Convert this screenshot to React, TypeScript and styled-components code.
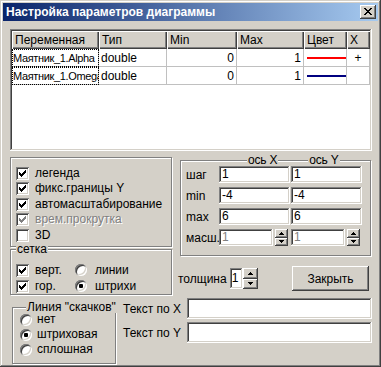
import React from 'react';
import styled, { createGlobalStyle, css } from 'styled-components';

const Global = createGlobalStyle`
  html, body { margin: 0; padding: 0; background: #d4d0c8; }
  body { font-family: "Liberation Sans", Arial, sans-serif; font-size: 11px; color: #000; }
  * { box-sizing: border-box; }
`;

const raised = css`
  box-shadow: inset -1px -1px #404040, inset 1px 1px #ffffff, inset -2px -2px #808080, inset 2px 2px #d4d0c8;
`;
const sunken = css`
  box-shadow: inset -1px -1px #ffffff, inset 1px 1px #808080, inset -2px -2px #d4d0c8, inset 2px 2px #404040;
`;

const Window = styled.div`
  width: 381px;
  height: 367px;
  background: #d4d0c8;
  box-shadow: inset -1px -1px #404040, inset 1px 1px #d4d0c8, inset -2px -2px #808080, inset 2px 2px #ffffff;
  padding: 3px;
  display: flex;
  flex-direction: column;
`;

const TitleBar = styled.div`
  height: 18px;
  display: flex;
  align-items: center;
  padding-left: 3px;
  padding-right: 2px;
  background: linear-gradient(to right, #0a246a, #a6caf0);
  color: #fff;
  font-weight: bold;
  font-size: 12px;
`;

const TitleText = styled.span`
  flex: 1;
  white-space: nowrap;
`;

const CloseBtn = styled.div`
  width: 16px;
  height: 14px;
  background: #d4d0c8;
  ${raised};
  display: flex;
  align-items: center;
  justify-content: center;
  padding-bottom: 1px;
`;

const Content = styled.div`
  padding: 8px 6px 0 7px;
  display: flex;
  flex-direction: column;
`;

/* ---------- grid ---------- */
const Grid = styled.div`
  width: 362px;
  height: 122px;
  background: #fff;
  padding: 2px;
  ${sunken};
`;

const GridRow = styled.div`
  display: flex;
  height: 18px;
`;

const HeadCell = styled.div<{ $w: number }>`
  width: ${p => p.$w}px;
  height: 18px;
  background: #d4d0c8;
  box-shadow: inset 1px 1px #ffffff, inset -1px -1px #404040, inset -2px -2px #808080;
  padding: 2px 0 0 3px;
  white-space: nowrap;
  overflow: hidden;
  font-size: 12px;
`;

const Cell = styled.div<{ $w: number; $align?: string; $focus?: boolean }>`
  width: ${p => p.$w}px;
  height: 18px;
  border-right: 1px solid #c0c0c0;
  border-bottom: 1px solid #c0c0c0;
  padding: 2px 2px 0 2px;
  text-align: ${p => p.$align || 'left'};
  white-space: nowrap;
  overflow: hidden;
  font-size: 12px;
  ${p => p.$focus && css`
    outline: 1px dotted #000;
    outline-offset: -1px;
    font-size: 11px;
    letter-spacing: -0.35px;
    padding: 3px 0 0 1px;
  `}
`;

const ColorLine = styled.div<{ $c: string }>`
  margin: 6px 0 0 1px;
  width: 40px;
  height: 2px;
  background: ${p => p.$c};
`;

/* ---------- controls ---------- */
const BoxWrap = styled.div<{ $disabled?: boolean }>`
  width: 13px;
  height: 13px;
  flex: none;
  background: #fff;
  box-shadow: inset 1px 1px #808080, inset -1px -1px #ffffff, inset 2px 2px #404040, inset -2px -2px #d4d0c8;
  display: flex;
  align-items: center;
  justify-content: center;
  color: ${p => (p.$disabled ? '#808080' : '#000')};
`;

const CheckMark = () => (
  <svg width="7" height="7" viewBox="0 0 7 7" shapeRendering="crispEdges">
    <path d="M0 2h1v3H0zM1 3h1v3H1zM2 4h1v3H2zM3 3h1v3H3zM4 2h1v3H4zM5 1h1v3H5zM6 0h1v3H6z" fill="currentColor" />
  </svg>
);

const CheckBox = ({ checked, disabled }: { checked?: boolean; disabled?: boolean }) => (
  <BoxWrap $disabled={disabled}>{checked && <CheckMark />}</BoxWrap>
);

const RadioCircle = styled.div`
  width: 12px;
  height: 12px;
  flex: none;
  border-radius: 50%;
  background: #fff;
  box-shadow: inset 1px 1px #808080, inset -1px -1px #ffffff, inset 2px 2px #404040, inset -2px -2px #d4d0c8;
  display: flex;
  align-items: center;
  justify-content: center;
`;

const RadioDot = styled.div`
  width: 4px;
  height: 4px;
  border-radius: 1px;
  background: #000;
`;

const Radio = ({ checked }: { checked?: boolean }) => (
  <RadioCircle>{checked && <RadioDot />}</RadioCircle>
);

const Option = styled.div<{ $h?: number; $gap?: number; $disabled?: boolean }>`
  display: flex;
  align-items: center;
  height: ${p => p.$h || 16}px;
  gap: ${p => p.$gap ?? 6}px;
  white-space: nowrap;
  font-size: 12px;
  line-height: 13px;
  ${p => p.$disabled && css`color: #808080; text-shadow: 1px 1px #ffffff;`}
`;

const Group = styled.div<{ $w: number; $h: number; $ml?: number; $mt?: number; $pl?: number }>`
  width: ${p => p.$w}px;
  height: ${p => p.$h}px;
  margin-left: ${p => p.$ml || 0}px;
  margin-top: ${p => p.$mt || 0}px;
  padding-left: ${p => p.$pl ?? 5}px;
  border: 1px solid #808080;
  box-shadow: inset 1px 1px #ffffff, 1px 1px #ffffff;
  display: flex;
  flex-direction: column;
  flex: none;
`;

const Legend = styled.span<{ $ml?: number }>`
  align-self: flex-start;
  margin-top: -7px;
  margin-left: ${p => p.$ml || 0}px;
  height: 12px;
  line-height: 12px;
  padding: 0 1px;
  background: #d4d0c8;
  font-size: 12px;
  white-space: nowrap;
`;

/* ---------- layout ---------- */
const MidRow = styled.div`
  display: flex;
  align-items: flex-start;
  margin-top: 6px;
  height: 138px;
`;

const LeftCol = styled.div`
  width: 162px;
  display: flex;
  flex-direction: column;
`;

const RightCol = styled.div`
  width: 193px;
  margin-left: 6px;
  display: flex;
  flex-direction: column;
`;

const CheckList = styled.div`
  padding-top: 7px;
  display: flex;
  flex-direction: column;
`;

const GridOpts = styled.div`
  margin-top: 7px;
  display: grid;
  grid-template-columns: 59px auto;
  grid-auto-rows: 16px;
`;

const AxisHead = styled.div`
  display: flex;
  height: 12px;
  margin-top: -7px;
  font-size: 12px;
`;

const AxisLabel = styled.span<{ $ml: number }>`
  margin-left: ${p => p.$ml}px;
  background: #d4d0c8;
  padding: 0 1px;
  line-height: 13px;
  letter-spacing: -0.2px;
`;

const AxisRows = styled.div`
  display: flex;
  flex-direction: column;
  gap: 4px;
`;

const AxisRow = styled.div`
  display: flex;
  align-items: center;
  height: 17px;
  gap: 1px;
`;

const RowLabel = styled.span`
  width: 32px;
  font-size: 12px;
`;

const Field = styled.div<{ $w: number; $h?: number; $disabled?: boolean; $pt?: number; $pl?: number }>`
  width: ${p => p.$w}px;
  height: ${p => p.$h || 17}px;
  background: #fff;
  ${sunken};
  padding: ${p => p.$pt ?? 1}px 0 0 ${p => p.$pl ?? 3}px;
  font-size: 12px;
  line-height: 15px;
  color: ${p => (p.$disabled ? '#808080' : '#000')};
  flex: none;
`;

const FieldPair = styled.div`
  width: 71px;
  display: flex;
  align-items: center;
  gap: 2px;
`;

const Spin = styled.div<{ $w: number; $h: number }>`
  width: ${p => p.$w}px;
  height: ${p => p.$h}px;
  display: flex;
  flex-direction: column;
  flex: none;
`;

const SpinBtn = styled.div`
  flex: 1;
  background: #d4d0c8;
  ${raised};
  display: flex;
  align-items: center;
  justify-content: center;
`;

const Arrow = ({ down }: { down?: boolean }) => (
  <svg width="5" height="3" viewBox="0 0 5 3" shapeRendering="crispEdges">
    {down ? (
      <path d="M0 0h5v1H0zM1 1h3v1H1zM2 2h1v1H2z" fill="#000" />
    ) : (
      <path d="M2 0h1v1H2zM1 1h3v1H1zM0 2h5v1H0z" fill="#000" />
    )}
  </svg>
);

const SpinButtons = ({ w, h }: { w: number; h: number }) => (
  <Spin $w={w} $h={h}>
    <SpinBtn><Arrow /></SpinBtn>
    <SpinBtn><Arrow down /></SpinBtn>
  </Spin>
);

const ThickRow = styled.div`
  display: flex;
  align-items: center;
  height: 25px;
  margin-top: 10px;
  font-size: 12px;
`;

const ThickLabel = styled.span`
  margin-right: 3px;
`;

const Button = styled.div`
  width: 77px;
  height: 25px;
  margin-left: auto;
  margin-right: 2px;
  background: #d4d0c8;
  ${raised};
  display: flex;
  align-items: center;
  justify-content: center;
  font-size: 12px;
`;

const BottomRow = styled.div`
  display: flex;
  align-items: flex-start;
`;

const LineOpts = styled.div`
  margin-top: -1px;
  display: flex;
  flex-direction: column;
`;

const TextFields = styled.div`
  margin-left: 7px;
  margin-top: 3px;
  width: 249px;
  display: flex;
  flex-direction: column;
  gap: 3px;
`;

const TextRow = styled.div`
  display: flex;
  align-items: center;
  height: 21px;
  font-size: 12px;
`;

const TextLabel = styled.span`
  width: 64px;
  white-space: nowrap;
`;

const TextInput = styled.div`
  flex: 1;
  height: 21px;
  background: #fff;
  ${sunken};
`;

const CloseGlyph = () => (
  <svg width="8" height="7" viewBox="0 0 8 7" shapeRendering="crispEdges">
    <path
      d="M0 0h2v1H0zM6 0h2v1H6zM1 1h2v1H1zM5 1h2v1H5zM2 2h4v1H2zM3 3h2v1H3zM2 4h4v1H2zM1 5h2v1H1zM5 5h2v1H5zM0 6h2v1H0zM6 6h2v1H6z"
      fill="#000"
    />
  </svg>
);

const cols = [87, 68, 70, 67, 43, 23];

const rows = [
  { name: 'Маятник_1.Alpha', color: '#ff0000', plus: true },
  { name: 'Маятник_1.Omega', color: '#000080', plus: false },
];

export default function App() {
  return (
    <>
      <Global />
      <Window>
        <TitleBar>
          <TitleText>Настройка параметров диаграммы</TitleText>
          <CloseBtn><CloseGlyph /></CloseBtn>
        </TitleBar>
        <Content>
          <Grid>
            <GridRow>
              {['Переменная', 'Тип', 'Min', 'Max', 'Цвет', 'X'].map((h, i) => (
                <HeadCell key={h} $w={cols[i]}>{h}</HeadCell>
              ))}
            </GridRow>
            {rows.map(r => (
              <GridRow key={r.name}>
                <Cell $w={cols[0]} $focus>{r.name}</Cell>
                <Cell $w={cols[1]}>double</Cell>
                <Cell $w={cols[2]} $align="right">0</Cell>
                <Cell $w={cols[3]} $align="right">1</Cell>
                <Cell $w={cols[4]}><ColorLine $c={r.color} /></Cell>
                <Cell $w={cols[5]} $align="center">{r.plus ? '+' : ''}</Cell>
              </GridRow>
            ))}
          </Grid>

          <MidRow>
            <LeftCol>
              <Group $w={162} $h={90}>
                <CheckList>
                  <Option $h={16}><CheckBox checked />легенда</Option>
                  <Option $h={15}><CheckBox checked />фикс.границы Y</Option>
                  <Option $h={16}><CheckBox checked />автомасштабирование</Option>
                  <Option $h={15} $disabled><CheckBox checked disabled />врем.прокрутка</Option>
                  <Option $h={16}><CheckBox />3D</Option>
                </CheckList>
              </Group>
              <Group $w={162} $h={46} $mt={2}>
                <Legend>сетка</Legend>
                <GridOpts>
                  <Option><CheckBox checked />верт.</Option>
                  <Option $gap={8}><Radio />линии</Option>
                  <Option><CheckBox checked />гор.</Option>
                  <Option $gap={8}><Radio checked />штрихи</Option>
                </GridOpts>
              </Group>
            </LeftCol>

            <RightCol>
              <Group $w={191} $h={96} $ml={2} $mt={3}>
                <AxisHead>
                  <AxisLabel $ml={61}>ось X</AxisLabel>
                  <AxisLabel $ml={30}>ось Y</AxisLabel>
                </AxisHead>
                <AxisRows>
                  <AxisRow><RowLabel>шаг</RowLabel><Field $w={71}>1</Field><Field $w={71}>1</Field></AxisRow>
                  <AxisRow><RowLabel>min</RowLabel><Field $w={71}>-4</Field><Field $w={71}>-4</Field></AxisRow>
                  <AxisRow><RowLabel>max</RowLabel><Field $w={71}>6</Field><Field $w={71}>6</Field></AxisRow>
                  <AxisRow>
                    <RowLabel>масш.</RowLabel>
                    <FieldPair>
                      <Field $w={54} $disabled>1</Field>
                      <SpinButtons w={13} h={17} />
                    </FieldPair>
                    <FieldPair>
                      <Field $w={54} $disabled>1</Field>
                      <SpinButtons w={13} h={17} />
                    </FieldPair>
                  </AxisRow>
                </AxisRows>
              </Group>
              <ThickRow>
                <ThickLabel>толщина</ThickLabel>
                <Field $w={13} $h={21} $pt={3} $pl={2}>1</Field>
                <SpinButtons w={15} h={21} />
                <Button>Закрыть</Button>
              </ThickRow>
            </RightCol>
          </MidRow>

          <BottomRow>
            <Group $w={104} $h={57} $ml={2} $mt={12} $pl={7}>
              <Legend $ml={6}>Линия "скачков"</Legend>
              <LineOpts>
                <Option $h={15} $gap={5}><Radio />нет</Option>
                <Option $h={15} $gap={5}><Radio checked />штриховая</Option>
                <Option $h={15} $gap={5}><Radio />сплошная</Option>
              </LineOpts>
            </Group>
            <TextFields>
              <TextRow><TextLabel>Текст по X</TextLabel><TextInput /></TextRow>
              <TextRow><TextLabel>Текст по Y</TextLabel><TextInput /></TextRow>
            </TextFields>
          </BottomRow>
        </Content>
      </Window>
    </>
  );
}
